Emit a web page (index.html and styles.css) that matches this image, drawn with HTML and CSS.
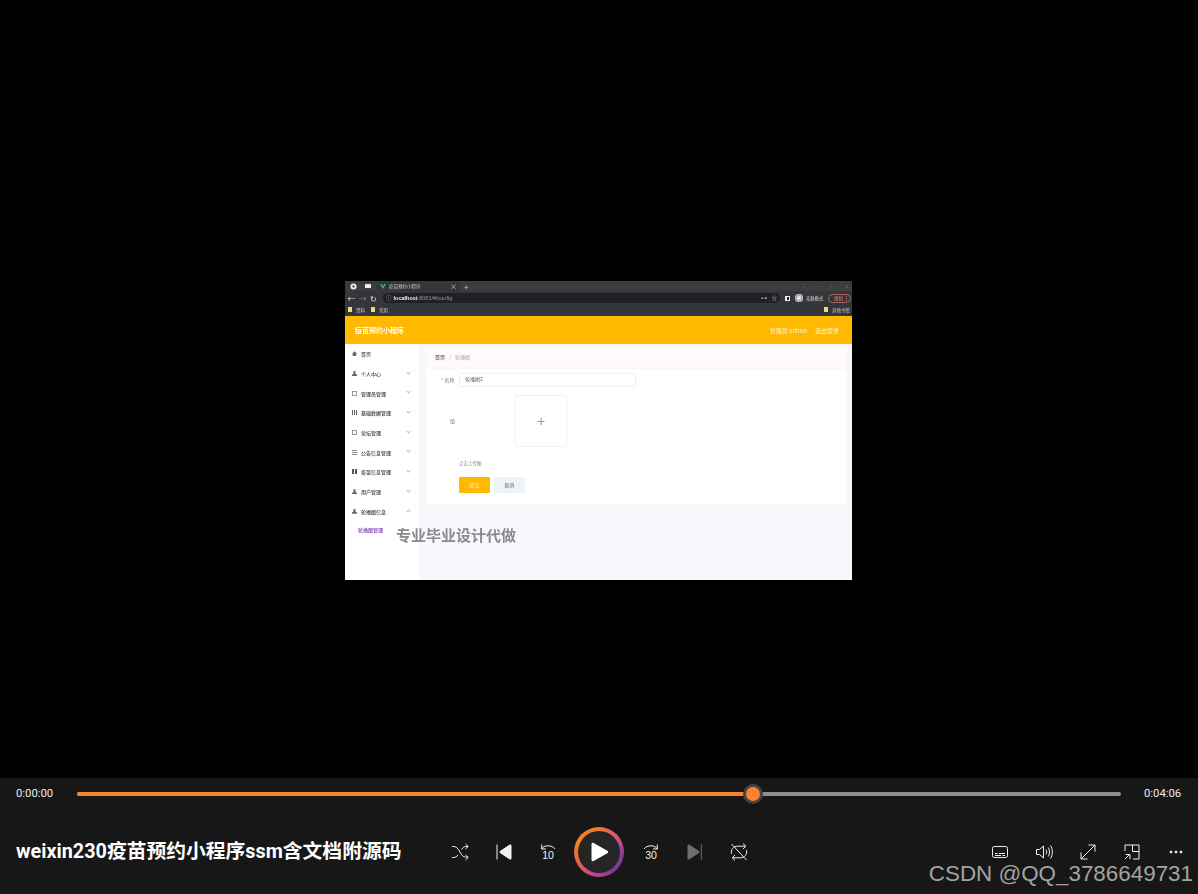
FILE: index.html
```html
<!DOCTYPE html>
<html lang="zh-CN">
<head>
  <meta charset="UTF-8">
  <meta name="viewport" content="width=device-width, initial-scale=1.0">
  <title>weixin230疫苗预约小程序ssm含文档附源码</title>
  <link rel="stylesheet" href="styles.css">
</head>
<body>
  <div class="stage">
    <div class="video">
      <div class="tabstrip">
        <svg class="tab-globe" viewBox="0 0 8 8"><circle cx="4" cy="4" r="3.5" fill="#eee"/><circle cx="4" cy="4" r="1.3" fill="#444"/></svg>
        <span class="tab-square"></span>
        <div class="tab">
          <svg class="tab-vue" viewBox="0 0 8 7"><path d="M0 0h2l2 3.4L6 0h2L4 7z" fill="#42b883"/></svg>
          <span class="tab-title">疫苗预约小程序</span>
          <span class="tab-close">×</span>
        </div>
        <span class="tab-plus">+</span>
        <div class="win-btns"><span>⌄</span><span>–</span><span>▫</span><span>×</span></div>
      </div>
      <div class="addressbar">
        <span class="nav-btn">←</span>
        <span class="nav-btn dim">→</span>
        <span class="nav-btn">↻</span>
        <div class="omnibox">
          <span class="info">ⓘ</span>
          <span class="url"><b>localhost</b>:8081/#/config</span>
          <span class="omni-icon">⊶</span>
          <span class="omni-icon">☆</span>
        </div>
        <span class="side-icon"></span>
        <span class="avatar"></span>
        <span class="incognito">无痕模式</span>
        <span class="update">更新 <b>⋮</b></span>
      </div>
      <div class="bookmarks">
        <span class="folder"></span><span class="bm">资料</span>
        <span class="folder"></span><span class="bm">常用</span>
        <span class="bm-right"><span class="folder"></span><span class="bm">其他书签</span></span>
      </div>

      <header class="app-header">
        <h1>疫苗预约小程序</h1>
        <div class="app-user"><span>管理员 admin</span><span>退出登录</span></div>
      </header>

      <div class="app-body">
        <aside class="sidebar">
          <div class="menu-item"><i class="mi home"></i>首页</div>
          <div class="menu-item"><i class="mi user"></i>个人中心<em></em></div>
          <div class="menu-item"><i class="mi line"></i>管理员管理<em></em></div>
          <div class="menu-item"><i class="mi bars"></i>基础数据管理<em></em></div>
          <div class="menu-item"><i class="mi line"></i>论坛管理<em></em></div>
          <div class="menu-item"><i class="mi list"></i>公告信息管理<em></em></div>
          <div class="menu-item"><i class="mi grid"></i>疫苗信息管理<em></em></div>
          <div class="menu-item"><i class="mi user"></i>用户管理<em></em></div>
          <div class="menu-item"><i class="mi user"></i>轮播图信息<em class="open"></em></div>
          <div class="menu-sub">轮播图管理</div>
        </aside>
        <main class="app-main">
          <div class="crumb"><b>首页</b><span class="sep">/</span><span>轮播图</span></div>
          <div class="form-card">
            <div class="form-row">
              <label><s>*</s> 名称</label>
              <div class="text-input">轮播图2</div>
            </div>
            <div class="upload-row">
              <label>值</label>
              <div class="upload">+</div>
            </div>
            <div class="hint">点击上传图</div>
            <div class="form-btns">
              <span class="btn submit">提交</span>
              <span class="btn cancel">取消</span>
            </div>
          </div>
        </main>
      </div>
    </div>
    <div class="promo">专业毕业设计代做</div>
  </div>

  <div class="player">
    <div class="seek-row">
      <span class="time">0:00:00</span>
      <div class="track">
        <div class="track-fill" style="width: 64.75%"><span class="knob"></span></div>
      </div>
      <span class="time">0:04:06</span>
    </div>
    <div class="ctrl-row">
      <div class="video-title">weixin230疫苗预约小程序ssm含文档附源码</div>
      <div class="transport">
        <button class="ic">
          <svg viewBox="0 0 20 20"><path d="M2 4.500h1.500c2 0 3.500 1 4.700 2.800l3.100 5c1 1.800 2.500 2.700 4.500 2.700H18M2 15.500h1.500c2 0 3.500-1 4.500-2.500M11.500 7.500c1.200-2 2.500-3 4.300-3H18M15.500 2l2.700 2.500-2.700 2.500M15.500 13l2.700 2.500-2.700 2.500"/></svg>
        </button>
        <button class="ic">
          <svg viewBox="0 0 20 20"><path class="solid" d="M17 3.500v13c0 .6-.6.900-1.100.600L6 10.500c-.4-.2-.4-.8 0-1l9.900-6.600c.5-.3 1.100 0 1.100.6z"/><path d="M3 2.500v15"/></svg>
        </button>
        <button class="ic">
          <svg viewBox="0 0 20 20"><path d="M3.700 7c1.200-2.200 3.300-3.200 6.300-3.200s5.500 1 7 3.200M3.700 2.500V7H8"/><text x="10" y="17">10</text></svg>
        </button>
        <button class="play"><span class="play-inner"><svg viewBox="0 0 20 20"><path d="M2.500 2.300v15.400c0 1.200 1.100 1.800 2.100 1.200l13.800-7.700c1-.6 1-2 0-2.500L4.600 1.100c-1-.6-2.100 0-2.100 1.200z"/></svg></span></button>
        <button class="ic">
          <svg viewBox="0 0 20 20"><path d="M16.300 7c-1.200-2.200-3.300-3.200-6.300-3.200s-5.500 1-7 3.200M16.300 2.500V7H12"/><text x="10" y="17">30</text></svg>
        </button>
        <button class="ic">
          <svg viewBox="0 0 20 20"><path class="solid muted" d="M3 3.500v13c0 .6.600.900 1.100.600L14 10.500c.4-.2.400-.8 0-1L4.100 2.900C3.600 2.600 3 2.900 3 3.500z"/><path class="muted-line" d="M16.300 2.500v15"/></svg>
        </button>
        <button class="ic">
          <svg viewBox="0 0 20 20"><path d="M2.500 2l15 16M2.600 12c-1.200-4.200 1.800-7.800 6-7.800h8M14 1.500l2.800 2.700L14 7M17.400 8c1.200 4.200-1.800 7.800-6 7.800h-8M6 13l-2.800 2.800L6 18.500"/></svg>
        </button>
      </div>
      <div class="tools">
        <button class="ic">
          <svg viewBox="0 0 20 20"><rect x="2.500" y="4.500" width="15" height="11" rx="2"/><path d="M5 11.500h2.500M9 11.500h6M5 13.500h6M12.500 13.500H15"/></svg>
        </button>
        <button class="ic">
          <svg viewBox="0 0 20 20"><path d="M2.500 7.500v5h3l4 3.500v-12l-4 3.500zM12 7.500c.9 1.500.9 3.500 0 5M14.300 5.500c1.600 2.800 1.600 6.200 0 9M16.600 3.500c2.300 4 2.300 9 0 13"/></svg>
        </button>
        <button class="ic">
          <svg viewBox="0 0 20 20"><path d="M3 17L17 3M10.500 3H17v6.500M3 10.500V17h6.500"/></svg>
        </button>
        <button class="ic">
          <svg viewBox="0 0 20 20"><path d="M3 9V3h14v14h-6M10.500 3v6.500H17M3 17l5-5M3.500 12.500H8V17"/></svg>
        </button>
        <button class="ic">
          <svg viewBox="0 0 20 20"><circle cx="5" cy="10" r="1" class="solid"/><circle cx="10" cy="10" r="1" class="solid"/><circle cx="15" cy="10" r="1" class="solid"/></svg>
        </button>
      </div>
    </div>
    <div class="csdn">CSDN @QQ_3786649731</div>
  </div>
</body>
</html>
```

FILE: styles.css
```css
html, body {
  margin: 0;
  height: 100%;
  overflow: hidden;
}

body {
  background: #000;
  font-family: "Noto Sans", "Noto Sans CJK SC", sans-serif;
  color: #fff;
}

.stage {
  position: relative;
  height: 778px;
  padding-top: 281px;
  box-sizing: border-box;
}

/* the recorded browser window, a bit soft like the video */
.video {
  width: 507px;
  height: 299px;
  margin-left: 345px;
  display: flex;
  flex-direction: column;
  overflow: hidden;
  filter: blur(0.5px);
  font-family: "Noto Sans CJK SC", sans-serif;
}

.promo {
  position: absolute;
  left: 396px;
  top: 525px;
  font: 700 15px/20px "Noto Sans CJK SC", sans-serif;
  color: #8a8a8e;
  filter: blur(0.3px);
}

.tabstrip {
  height: 10px;
  background: #3c3d40;
  display: flex;
  align-items: center;
  padding-left: 5px;
  font-size: 4.500px;
  color: #ccc;
}

.tab-globe {
  width: 7px;
  height: 7px;
}

.tab-square {
  width: 6px;
  height: 4px;
  margin-left: 8px;
  background: #eee;
}

.tab {
  height: 10px;
  width: 84px;
  margin-left: 5px;
  background: #35363a;
  display: flex;
  align-items: center;
  padding-left: 4px;
  box-sizing: border-box;
}

.tab-vue {
  width: 6px;
  height: 5px;
}

.tab-title {
  margin-left: 3px;
  flex: 1;
}

.tab-close {
  margin-right: 3px;
  font-size: 7px;
}

.tab-plus {
  margin-left: 4px;
  font-size: 8px;
}

.win-btns {
  margin-left: auto;
  display: flex;
  gap: 11px;
  padding-right: 3px;
  color: #777;
}

.addressbar {
  height: 14px;
  background: #35363a;
  display: flex;
  align-items: center;
  padding-left: 1px;
  font-size: 5.500px;
  color: #ddd;
}

.nav-btn {
  width: 11px;
  text-align: center;
  font-size: 8px;
  line-height: 13px;
}

.nav-btn.dim {
  color: #888;
}

.omnibox {
  width: 397px;
  height: 10px;
  margin-left: 4px;
  background: #202124;
  border-radius: 5px;
  display: flex;
  align-items: center;
  padding: 0 3px 0 3px;
  box-sizing: border-box;
  color: #999;
}

.info {
  margin-right: 2px;
}

.url {
  flex: 1;
  font-family: "Liberation Sans", sans-serif;
}

.url b {
  color: #eee;
}

.omni-icon {
  margin-left: 4px;
  color: #ccc;
}

.side-icon {
  width: 5px;
  height: 5px;
  margin-left: 5px;
  background: linear-gradient(90deg, #eee 50%, #222 50%);
  border: 1px solid #eee;
  box-sizing: border-box;
}

.avatar {
  width: 8px;
  height: 8px;
  margin-left: 5px;
  border-radius: 50%;
  background: #e8e8e8;
  box-shadow: inset 0 0 0 2px #aaa;
  flex: none;
}

.incognito {
  margin-left: 3px;
  font-size: 4.300px;
  white-space: nowrap;
}

.update {
  margin-left: auto;
  margin-right: 1px;
  height: 9px;
  width: 23px;
  padding-left: 5px;
  box-sizing: border-box;
  border: 1px solid #a8645c;
  border-radius: 5px;
  font-size: 4.500px;
  line-height: 7px;
  color: #e88;
  white-space: nowrap;
}

.bookmarks {
  height: 11px;
  background: #35363a;
  display: flex;
  align-items: center;
  padding: 0 0 2px 3px;
  box-sizing: border-box;
  font-size: 4.500px;
  color: #ccc;
}

.folder {
  width: 4px;
  height: 5px;
  background: #fbd66a;
  margin-right: 4px;
}

.bm {
  margin-right: 6px;
}

.bm-right {
  margin-left: auto;
  display: flex;
  align-items: center;
}

.bm-right .bm {
  margin-right: 2px;
}

.app-header {
  height: 28px;
  background: #ffb900;
  display: flex;
  align-items: center;
  justify-content: space-between;
  padding: 0 13px 0 10px;
  flex: none;
}

.app-header h1 {
  margin: 0;
  font-size: 7px;
  font-weight: 700;
}

.app-user {
  display: flex;
  gap: 8px;
  font-size: 6px;
  color: #fff3d0;
}

.app-body {
  flex: 1;
  display: flex;
  background: #f8f8fc;
}

.sidebar {
  width: 74px;
  background: #fff;
  box-sizing: border-box;
  font-size: 5px;
  font-weight: 500;
  color: #444;
}

.menu-item {
  height: 19.700px;
  display: flex;
  align-items: center;
  padding: 0 9px 0 7px;
}

/* small chevron at the end of a menu row */
.menu-item em {
  width: 3px;
  height: 3px;
  margin: -3px 0 0 auto;
  box-sizing: border-box;
  border-right: 1px solid #bbb;
  border-bottom: 1px solid #bbb;
  transform: rotate(45deg);
}

.menu-item em.open {
  margin-top: 0;
  transform: rotate(225deg);
}

.mi {
  width: 5px;
  height: 5px;
  margin-right: 4px;
  background: #666;
  flex: none;
}

.mi.home {
  clip-path: polygon(50% 0, 100% 50%, 85% 50%, 85% 100%, 15% 100%, 15% 50%, 0 50%);
}

.mi.user {
  clip-path: polygon(30% 0, 70% 0, 70% 55%, 100% 75%, 100% 100%, 0 100%, 0 75%, 30% 55%);
}

.mi.line {
  background: none;
  border: 1px solid #999;
  box-sizing: border-box;
}

.mi.bars {
  background: linear-gradient(90deg, #666 30%, transparent 30%, transparent 40%, #666 40%, #666 65%, transparent 65%, transparent 75%, #666 75%);
}

.mi.list {
  background: repeating-linear-gradient(0deg, #888 0, #888 1px, transparent 1px, transparent 2px);
}

.mi.grid {
  background: linear-gradient(90deg, #555 40%, transparent 40%, transparent 60%, #555 60%);
}

.menu-sub {
  padding-left: 13px;
  line-height: 18px;
  color: #7a3fb0;
}

.app-main {
  flex: 1;
  padding: 4px 6px 0 8px;
  min-width: 0;
}

.crumb {
  height: 19px;
  background: #fffbfb;
  display: flex;
  align-items: center;
  padding: 0 0 3px 8px;
  box-sizing: border-box;
  font-size: 5px;
  color: #aaa;
}

.crumb b {
  color: #555;
  font-weight: 500;
}

.crumb .sep {
  margin: 0 4px;
}

.form-card {
  height: 135px;
  margin-top: 2px;
  padding: 4px 0 0 14px;
  box-sizing: border-box;
  background: #fff;
  border-radius: 2px;
  font-size: 5px;
  color: #777;
}

.form-row {
  display: flex;
  align-items: center;
}

.form-row label {
  width: 18px;
  margin-top: -1px;
}

.form-row s {
  color: #f56c6c;
  text-decoration: none;
}

.text-input {
  width: 177px;
  height: 14px;
  padding-left: 5px;
  box-sizing: border-box;
  border: 1px solid #efefef;
  border-radius: 2px;
  line-height: 10px;
  color: #666;
}

.upload-row {
  display: flex;
  align-items: center;
  margin-top: 8px;
}

.upload-row label {
  width: 74px;
  padding: 0 0 2px 9px;
  box-sizing: border-box;
}

.upload {
  width: 52px;
  height: 52px;
  border: 1px solid #f1f1f1;
  box-sizing: border-box;
  border-radius: 2px;
  text-align: center;
  font: 300 14px/50px "Liberation Sans", sans-serif;
  color: #999;
}

.hint {
  margin: 13px 0 0 18px;
  font-size: 4.500px;
  line-height: 6px;
  color: #888;
}

.form-btns {
  display: flex;
  gap: 4px;
  margin: 11px 0 0 18px;
}

.btn {
  width: 31px;
  height: 16px;
  border-radius: 1px;
  text-align: center;
  font-size: 5px;
  line-height: 16px;
}

.btn.submit {
  background: #ffb900;
  color: #fff3d0;
}

.btn.cancel {
  background: #edf3f9;
  color: #667;
}

/* player bar */
.player {
  position: relative;
  height: 116px;
  background: #171717;
}

.seek-row {
  height: 32px;
  display: flex;
  align-items: center;
  padding: 0 17px 0 16px;
}

.time {
  width: 37px;
  font: 11.300px/16px Roboto, sans-serif;
  color: #eee;
  white-space: nowrap;
}

.track {
  flex: 1;
  height: 4px;
  margin: 0 23px 0 24px;
  border-radius: 2px;
  background: #8f8f8f;
}

.track-fill {
  position: relative;
  height: 4px;
  border-radius: 2px;
  background: #fb8230;
}

.knob {
  position: absolute;
  right: -7px;
  top: -5px;
  width: 14px;
  height: 14px;
  border-radius: 50%;
  background: #fb8230;
  box-shadow: 0 0 0 3px #444;
}

.ctrl-row {
  display: flex;
  align-items: center;
  height: 44px;
  padding: 20px 0 0 16px;
}

.video-title {
  width: 422px;
  flex: none;
  font: 700 19.800px/28px Roboto, "Noto Sans CJK SC", sans-serif;
  white-space: nowrap;
}

.transport {
  display: flex;
  align-items: center;
}

.tools {
  margin-left: auto;
  display: flex;
}

button {
  padding: 0;
  border: 0;
  background: none;
  cursor: pointer;
}

.ic {
  width: 44px;
  height: 44px;
  display: flex;
  align-items: center;
  justify-content: center;
}

.ic svg {
  width: 20px;
  height: 20px;
  fill: none;
  stroke: #f2f2f2;
  stroke-width: 1;
}

.ic svg .solid {
  fill: #f2f2f2;
}

.ic svg .muted {
  fill: #6e6e6e;
  stroke: #6e6e6e;
}

.ic svg .muted-line {
  stroke: #6e6e6e;
}

.ic svg text {
  fill: #f2f2f2;
  stroke: none;
  font: 10.500px "Liberation Sans", sans-serif;
  text-anchor: middle;
}

.play {
  width: 50px;
  height: 50px;
  margin: 0 5px 0 4px;
  border-radius: 50%;
  background: conic-gradient(#f07a2c 0deg, #c9508a 60deg, #7f3a98 100deg, #7a3a98 140deg, #c83f92 190deg, #e8663a 250deg, #f47f2c 290deg, #f07a2c 360deg);
  padding: 4px;
  box-sizing: border-box;
}

.play-inner {
  display: flex;
  align-items: center;
  justify-content: center;
  width: 100%;
  height: 100%;
  border-radius: 50%;
  background: #252525;
}

.play-inner svg {
  width: 20px;
  height: 20px;
  fill: #fff;
}

.csdn {
  position: absolute;
  right: 5px;
  bottom: 6px;
  font: 22.400px/28px "Liberation Sans", sans-serif;
  color: #a3a3a3;
  white-space: nowrap;
}
```
